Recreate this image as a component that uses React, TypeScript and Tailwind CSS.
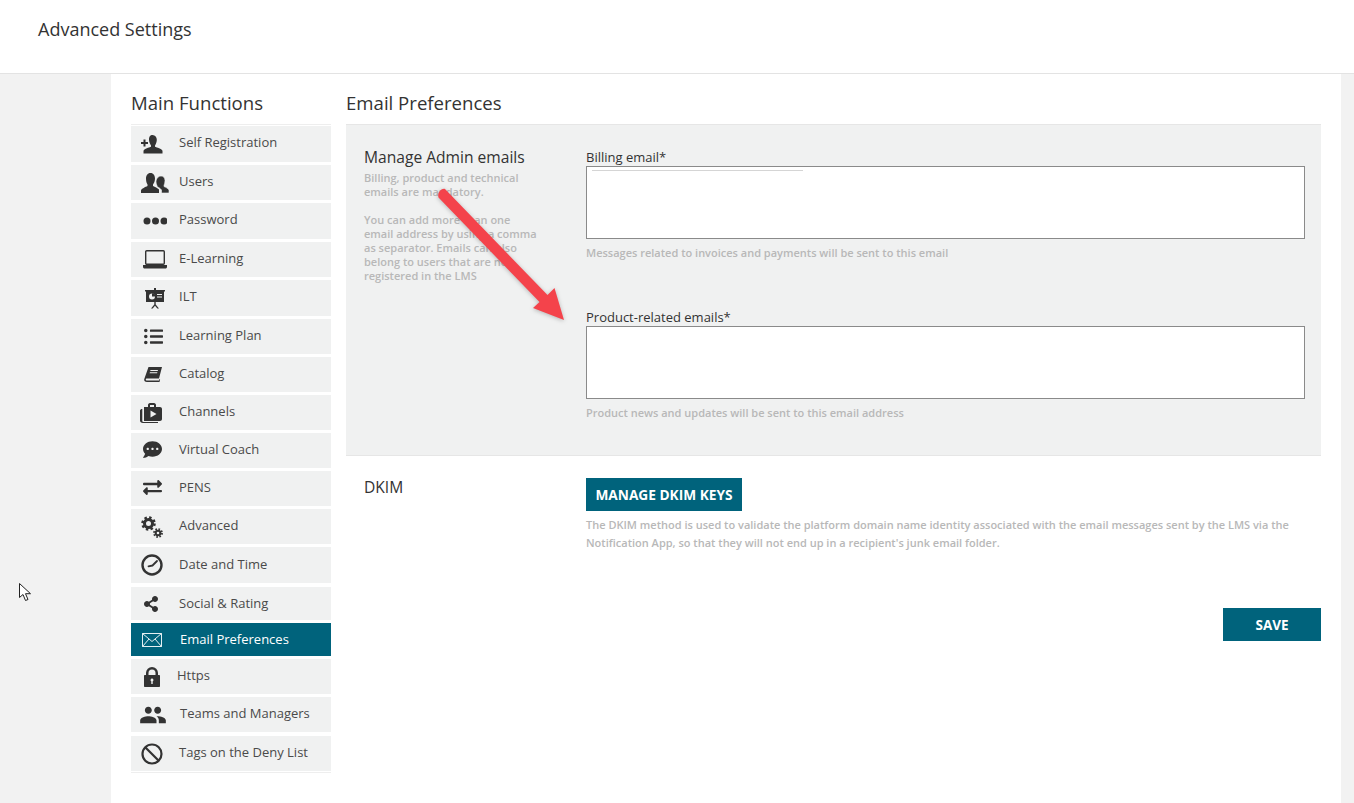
import React from 'react';
import { FaCommentDots, FaExchangeAlt, FaListUl, FaShareAlt } from 'react-icons/fa';
import { MdPeople } from 'react-icons/md';

const SelfRegIcon = () => (
  <svg width="22" height="19" viewBox="0 0 22 19" fill="#333">
    <path d="M0 7h2.500V4.500h2V7H7v2H4.500v2.500h-2V9H0z" />
    <path d="M11.500 0c2.800 0 4.300 2.200 4.300 4.800 0 2.200-.8 4.200-1.800 5.700v1.300c2 1 6.500 1.700 7.500 3.900V18.500H2.500v-2.800c1-2.200 5.500-2.900 7.500-3.900v-1.300C9 9 8 7 8 4.800 8 2.200 8.700 0 11.500 0z" />
  </svg>
);

const UsersIcon = () => (
  <svg width="28" height="20" viewBox="0 0 28 20" fill="#333">
    <path d="M9.500 0c3 0 4.500 2.500 4.500 5.500 0 2.500-1 4.500-2 6v1.500c2 1 4.500 2 6 3.500V20H0v-2.500C.5 15.500 4.500 14 6.500 13v-1.500c-1-1.500-1.500-3.500-1.500-6C5 2.500 6.500 0 9.500 0z" />
    <path d="M20 3c2.500 0 4 2 4 4.500 0 2-.5 3.500-1 5v1c1.500.7 4 1.800 5 3.500v3h-7.500v-3c-1-1.500-3-2.700-4.500-3.500v-1c-.6-1-1-3-1-4.500C15.500 5 17.500 3 20 3z" stroke="#f0f1f1" strokeWidth=".6" />
  </svg>
);

const DotsIcon = () => (
  <svg width="24" height="8" viewBox="0 0 24 8" fill="#333">
    <circle cx="4" cy="4" r="3.500" />
    <circle cx="12.500" cy="4" r="3.500" />
    <circle cx="21" cy="4" r="3.500" />
  </svg>
);

const LaptopIcon = () => (
  <svg width="24" height="19" viewBox="0 0 24 19" fill="none" stroke="#333">
    <rect x="2.700" y=".7" width="18.600" height="13.600" rx="1" strokeWidth="1.400" />
    <path d="M0 15h24v2c0 .8-.8 1.500-1.500 1.500h-21C.8 18.500 0 17.800 0 17z" fill="#333" stroke="none" />
  </svg>
);

const IltIcon = () => (
  <svg width="20" height="21" viewBox="0 0 20 21" fill="#333">
    <path d="M0 2h20v1.500h-1V14H1V3.500H0z" />
    <rect x="9" y="0" width="2" height="2" />
    <circle cx="7" cy="8.500" r="3" fill="#f0f1f1" />
    <path d="M7 8.500V5.200a3.300 3.300 0 0 1 3.300 3.300z" fill="#333" />
    <path d="M12 6h5v1h-5zM12 8.500h5v1h-5z" fill="#f0f1f1" />
    <path d="M9.300 14h1.400v2.500l3.300 4h-1.700l-2.300-2.700-2.300 2.700H6l3.300-4z" />
  </svg>
);

const BookIcon = () => (
  <svg width="18" height="15" viewBox="0 0 18 15" fill="#333">
    <path d="M4.500 0H18l-3 11.500H3c-.8 0-1.200.4-1.200 1s.4 1 1.200 1h12l.5-1.600.6.400L15.500 15H3c-2 0-3-1-2.800-2.800z" />
    <path d="M6.500 3h7.500l-.3 1H6.200zM5.900 5.200h7.500l-.3 1H5.600z" fill="#f0f1f1" />
  </svg>
);

const ChannelsIcon = () => (
  <svg width="22" height="20" viewBox="0 0 22 20" fill="#333">
    <path d="M4 4h4V2c0-1 .8-2 2-2h4c1.200 0 2 1 2 2v2h4c1 0 2 .8 2 2v10c0 1-1 2-2 2H4V4zm6-2v2h4V2z" fillRule="evenodd" />
    <path d="M10.500 7.500l6 3.500-6 3.500z" fill="#f0f1f1" />
    <path d="M2.300 6v12c0 .6.400.9 1 .9H18v1H3c-1.800 0-3-1-3-2.500V7.500C0 6.600 1 6 2.300 6z" />
  </svg>
);

const GearsIcon = () => (
  <svg width="22" height="22" viewBox="0 0 22 22" fill="none" stroke="#333">
    <circle cx="7.500" cy="7.500" r="4" strokeWidth="3" />
    <circle cx="7.500" cy="7.500" r="6" strokeWidth="2.500" strokeDasharray="2.400 2.300" />
    <circle cx="17" cy="17" r="2.300" strokeWidth="2" />
    <circle cx="17" cy="17" r="4" strokeWidth="1.800" strokeDasharray="1.600 1.540" />
  </svg>
);

const ClockIcon = () => (
  <svg width="22" height="22" viewBox="0 0 22 22" fill="none" stroke="#333">
    <circle cx="11" cy="11" r="9.500" strokeWidth="2.400" />
    <path d="M16 7l-4.500 4.500-4 .8" strokeWidth="1.800" strokeLinecap="round" strokeLinejoin="round" />
  </svg>
);

const MailIcon = () => (
  <svg width="20" height="14" viewBox="0 0 20 14" fill="none" stroke="#fff" strokeWidth=".9">
    <path d="M.5.5h19v13H.5z" />
    <path d="M.5.5L10 8.500 19.500.5M.5 13.500l6.500-7.500M19.500 13.500L13 6" />
  </svg>
);

const LockIcon = () => (
  <svg width="16" height="20" viewBox="0 0 16 20" fill="#333">
    <path fillRule="evenodd" d="M2 8V6a6 6 0 0 1 12 0v2h1c.6 0 1 .4 1 1v10c0 .6-.4 1-1 1H1c-.6 0-1-.4-1-1V9c0-.6.4-1 1-1zm2.500 0h7V6a3.500 3.500 0 0 0-7 0zM8 11.500a1.500 1.500 0 0 0-.7 2.800V17h1.400v-2.700A1.500 1.500 0 0 0 8 11.500z" />
  </svg>
);

const BanIcon = () => (
  <svg width="22" height="22" viewBox="0 0 22 22" fill="none" stroke="#333" strokeWidth="2.200">
    <circle cx="11" cy="11" r="9.500" />
    <path d="M4.500 4.500l13 13" />
  </svg>
);

const menu = [
  { label: 'Self Registration', row: 'h-[36px]', icon: <SelfRegIcon />, iconBox: 'pl-[10px]', text: 'ml-[16px] mb-[4px]' },
  { label: 'Users', row: 'h-[35px]', icon: <UsersIcon />, iconBox: 'pl-[10px]', text: 'ml-[10px] mb-[4px]' },
  { label: 'Password', row: 'h-[36px]', icon: <DotsIcon />, iconBox: 'pl-[12px]', text: 'ml-[12px] mb-[4px]' },
  { label: 'E-Learning', row: 'h-[35px]', icon: <LaptopIcon />, iconBox: 'pl-[12px]', text: 'ml-[12px] mb-[4px]' },
  { label: 'ILT', row: 'h-[36px]', icon: <IltIcon />, iconBox: 'pl-[14px]', text: 'ml-[14px] mb-[4px]' },
  { label: 'Learning Plan', row: 'h-[35px]', icon: <FaListUl size={19} color="#333" />, iconBox: 'pl-[13px]', text: 'ml-[16px] mb-[4px]' },
  { label: 'Catalog', row: 'h-[35px]', icon: <BookIcon />, iconBox: 'pl-[13px]', text: 'ml-[17px] mb-[4px]' },
  { label: 'Channels', row: 'h-[35px]', icon: <ChannelsIcon />, iconBox: 'pl-[9px]', text: 'ml-[17px] mb-[4px]' },
  { label: 'Virtual Coach', row: 'h-[35px]', icon: <FaCommentDots size={19} color="#333" />, iconBox: 'pl-[12px] mb-[2px]', text: 'ml-[17px] mb-[4px]' },
  { label: 'PENS', row: 'h-[35px]', icon: <FaExchangeAlt size={19} color="#333" />, iconBox: 'pl-[12px] mb-[2px]', text: 'ml-[17px] mb-[4px]' },
  { label: 'Advanced', row: 'h-[35px]', icon: <GearsIcon />, iconBox: 'pl-[10px]', text: 'ml-[16px] mb-[4px]' },
  { label: 'Date and Time', row: 'h-[36px] mb-px', icon: <ClockIcon />, iconBox: 'pl-[10px]', text: 'ml-[16px] mb-[2px]' },
  { label: 'Social & Rating', row: 'h-[33px]', icon: <FaShareAlt size={16} color="#333" />, iconBox: 'pl-[12px]', text: 'ml-[20px] mb-[2px]' },
  { label: 'Email Preferences', row: 'h-[33px]', active: true, icon: <MailIcon />, iconBox: 'pl-[11px]', text: 'ml-[18px] mb-[2px]' },
  { label: 'Https', row: 'h-[35px]', icon: <LockIcon />, iconBox: 'pl-[13px]', text: 'ml-[17px] mb-[4px]' },
  { label: 'Teams and Managers', row: 'h-[35px] mb-px', icon: <MdPeople size={28} color="#333" />, iconBox: 'pl-[8px]', text: 'ml-[13px] mb-[4px]' },
  { label: 'Tags on the Deny List', row: 'h-[35px]', icon: <BanIcon />, iconBox: 'pl-[10px]', text: 'ml-[16px] mb-[4px]' },
];

const Arrow = () => (
  <svg
    className="absolute left-[430px] top-[180px] drop-shadow-[0_1px_2px_rgba(0,0,0,0.25)]"
    width="145"
    height="150"
    viewBox="430 180 145 150"
  >
    <path d="M438.500 197.500c-1.500-5 3-9.500 6.500-8.500L547.500 295l7-7 9.500 32-31-12 6.500-6z" fill="#f4434b" />
  </svg>
);

const Cursor = () => (
  <svg className="absolute left-[19px] top-[583px]" width="13" height="19" viewBox="0 0 13 19">
    <path d="M.5.5v14l3.500-3 2.500 6 2.500-1-2.500-5.800h5z" fill="#fff" stroke="#222" strokeWidth="1" />
  </svg>
);

export default function App() {
  return (
    <div className="relative h-[803px] w-[1354px] overflow-hidden bg-[#f2f2f2] font-['Open_Sans',sans-serif] text-[#333]">
      <header className="flex h-[74px] items-start border-b border-[#e3e3e3] bg-white pl-[38px] pt-[17px]">
        <h1 className="text-[18px] font-medium leading-[25px] text-[#333]">Advanced Settings</h1>
      </header>

      <div className="ml-[111px] flex h-[729px] w-[1230px] gap-[15px] bg-white pl-[20px] pt-[17px]">
        <aside className="w-[200px]">
          <h2 className="text-[18.600px] font-medium leading-[23px]">Main Functions</h2>
          <nav className="mt-[10px] flex flex-col gap-[3px] border-y border-[#eeeeee] py-px">
            {menu.map((item) => (
              <div
                key={item.label}
                className={`flex items-center ${item.row} ${item.active ? 'bg-[#00637c] text-white' : 'bg-[#f0f1f1] text-[#4a4a4a]'}`}
              >
                <div className={`flex shrink-0 items-center ${item.iconBox}`}>{item.icon}</div>
                <span className={`text-[13px] leading-[18px] ${item.text}`}>{item.label}</span>
              </div>
            ))}
          </nav>
        </aside>

        <main className="w-[975px]">
          <h2 className="text-[18.600px] font-medium leading-[23px]">Email Preferences</h2>
          <section className="mt-[10px] flex h-[332px] border-y border-[#e6e6e6] bg-[#f0f1f1] py-px pl-[18px]">
            <div className="w-[222px] pt-[21px]">
              <h3 className="mb-[4px] text-[15.600px] font-medium leading-[20px] text-[#333]">Manage Admin emails</h3>
              <p className="w-[175px] text-[11px] font-semibold leading-[14px] text-[#b8b8b8]">
                Billing, product and technical emails are mandatory.
              </p>
              <p className="mt-[14px] w-[175px] text-[11px] font-semibold leading-[14px] text-[#b8b8b8]">
                You can add more than one email address by using a comma as separator. Emails can also belong to users
                that are not registered in the LMS
              </p>
            </div>
            <div className="w-[719px] pt-[23px]">
              <label className="block text-[13px] leading-[17px]">Billing email*</label>
              <div className="h-[73px] border border-[#8a8a8a] bg-white px-[5px] pt-[3px]">
                <div className="h-px w-[211px] bg-[#d5d5d5]" />
              </div>
              <p className="mt-[6px] text-[11px] font-semibold leading-[15px] text-[#b8b8b8]">
                Messages related to invoices and payments will be sent to this email
              </p>
              <label className="mt-[49px] block text-[13px] leading-[17px]">Product-related emails*</label>
              <div className="h-[73px] border border-[#8a8a8a] bg-white" />
              <p className="mt-[6px] text-[11px] font-semibold leading-[15px] text-[#b8b8b8]">
                Product news and updates will be sent to this email address
              </p>
            </div>
          </section>

          <section className="flex pl-[18px] pt-[22px]">
            <h3 className="-mt-px w-[222px] text-[15.600px] font-medium leading-[20px] text-[#333]">DKIM</h3>
            <div className="w-[719px]">
              <button className="h-[33px] w-[156px] bg-[#00637c] pt-[2px] text-[13.700px] font-bold text-white">
                MANAGE DKIM KEYS
              </button>
              <p className="mt-[5px] text-[11px] font-semibold leading-[18px] text-[#b8b8b8]">
                The DKIM method is used to validate the platform domain name identity associated with the email messages
                sent by the LMS via the Notification App, so that they will not end up in a recipient's junk email
                folder.
              </p>
            </div>
          </section>

          <div className="mt-[56px] flex justify-end">
            <button className="h-[33px] w-[98px] bg-[#00637c] pt-[2px] text-[13.500px] font-bold text-white">SAVE</button>
          </div>
        </main>
      </div>

      <Arrow />
      <Cursor />
    </div>
  );
}
